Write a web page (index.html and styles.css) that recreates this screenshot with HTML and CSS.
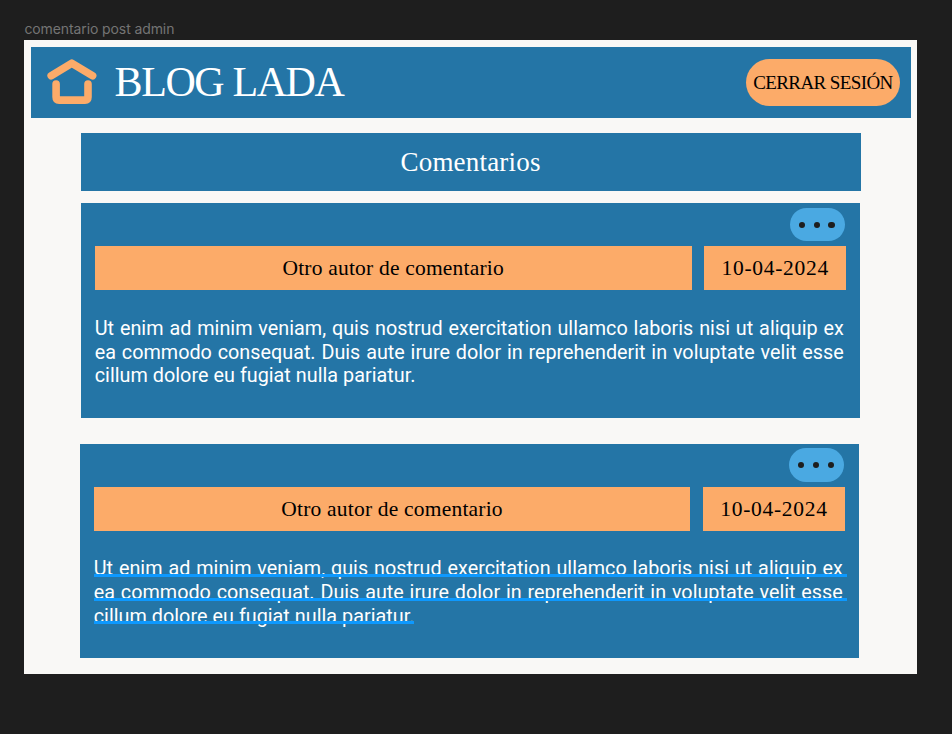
FILE: index.html
```html
<!DOCTYPE html>
<html lang="es">
<head>
<meta charset="utf-8">
<title>comentario post admin</title>
<link rel="stylesheet" href="styles.css">
</head>
<body>
<div class="frame-label">comentario post admin</div>
<main class="frame">
  <header class="topbar">
    <svg class="home" width="52" height="48" viewBox="0 0 52 48" fill="none" stroke="#fcab69" stroke-width="7.6" stroke-linecap="round">
      <path d="M4.2 19.8L24.8 7.2L45.6 19.8" stroke-linejoin="round"/>
      <path d="M9.1 28V41.1Q9.1 44.1 12.1 44.1H38Q41 44.1 41 41.1V28"/>
    </svg>
    <h1 class="brand">BLOG LADA</h1>
    <button class="logout">CERRAR SESIÓN</button>
  </header>
  <h2 class="section-title">Comentarios</h2>
  <article class="comment">
    <button class="more" aria-label="Opciones"><i></i><i></i><i></i></button>
    <div class="meta">
      <div class="author">Otro autor de comentario</div>
      <div class="date">10-04-2024</div>
    </div>
    <p class="text">
      <span class="line">Ut enim ad minim veniam, quis nostrud exercitation ullamco laboris nisi ut aliquip ex</span>
      <span class="line">ea commodo consequat. Duis aute irure dolor in reprehenderit in voluptate velit esse</span>
      <span class="line last">cillum dolore eu fugiat nulla pariatur.</span>
    </p>
  </article>
  <article class="comment selected">
    <button class="more" aria-label="Opciones"><i></i><i></i><i></i></button>
    <div class="meta">
      <div class="author">Otro autor de comentario</div>
      <div class="date">10-04-2024</div>
    </div>
    <p class="text">
      <span class="line">Ut enim ad minim veniam, quis nostrud exercitation ullamco laboris nisi ut aliquip ex</span>
      <span class="line">ea commodo consequat. Duis aute irure dolor in reprehenderit in voluptate velit esse</span>
      <span class="line last">cillum dolore eu fugiat nulla pariatur.</span>
    </p>
  </article>
</main>
</body>
</html>
```
FILE: styles.css
```css
* { box-sizing: border-box; }
body {
  margin: 0;
  height: 734px;
  padding: 20px 35px 0 24.4px;
  background: #1e1e1e;
  overflow: hidden;
}
.frame-label {
  height: 20px;
  font: 14px/18px Inter, sans-serif;
  letter-spacing: -0.1px;
  color: #747474;
}
.frame {
  height: 634.4px;
  padding: 6.6px 6px 0 6.2px;
  background: #f9f8f6;
}
h1, h2, p { margin: 0; font-weight: 400; }
button { border: 0; padding: 0; }
.topbar {
  display: flex;
  align-items: center;
  height: 71.8px;
  padding: 0 10.8px 0 16.4px;
  background: #2475a6;
}
.home { margin-top: -5px; }
.brand {
  margin-left: 15.6px;
  font: 42px/60px "Liberation Serif", serif;
  letter-spacing: -1.4px;
  color: #fff;
  white-space: nowrap;
}
.logout {
  width: 154.5px;
  height: 47.5px;
  margin-left: auto;
  padding-top: 1px;
  border-radius: 24px;
  background: #fcab69;
  color: #000;
  font: 19px "Liberation Serif", serif;
  letter-spacing: -0.6px;
  white-space: nowrap;
}
.section-title {
  width: 780px;
  height: 58px;
  margin: 14.6px 0 0 50px;
  background: #2475a6;
  color: #fff;
  font: 27px/59px "Liberation Serif", serif;
  letter-spacing: 0.2px;
  text-align: center;
}
.comment {
  display: flex;
  flex-direction: column;
  width: 779.8px;
  height: 214.4px;
  margin: 12.5px 0 0 50px;
  padding: 4.5px 14px 0 14.2px;
  background: #2475a6;
}
.comment.selected {
  width: 779.4px;
  margin: 26px 0 0 49px;
  padding-right: 13.8px;
}
.more {
  display: flex;
  align-self: flex-end;
  align-items: center;
  justify-content: center;
  gap: 8.4px;
  width: 55px;
  height: 33.5px;
  margin-right: 1.4px;
  padding-right: 1.4px;
  border-radius: 17px;
  background: #4aa9e2;
}
.selected .more { margin-right: 1px; }
.more i { width: 6.4px; height: 6.4px; border-radius: 50%; background: #1e1e1e; }
.meta { display: flex; gap: 12.4px; margin-top: 4.8px; }
.author, .date {
  height: 44px;
  background: #fcab69;
  color: #000;
  font: 21.5px/45px "Liberation Serif", serif;
  letter-spacing: 0.2px;
  text-align: center;
}
.author { flex: 1; }
.date { width: 142.4px; letter-spacing: 0.7px; }
.text {
  width: 749px;
  margin-top: 26.6px;
  color: #fff;
  font: 19.8px/23.7px Roboto, sans-serif;
}
.line {
  display: block;
  position: relative;
  white-space: nowrap;
  text-align-last: justify;
}
.line.last { width: 320.6px; }
.selected .line::after {
  content: "";
  position: absolute;
  left: 0;
  right: -4.5px;
  top: 16.6px;
  height: 3px;
  background: #0d99ff;
}
.selected .line.last::after { right: 0; }
```
